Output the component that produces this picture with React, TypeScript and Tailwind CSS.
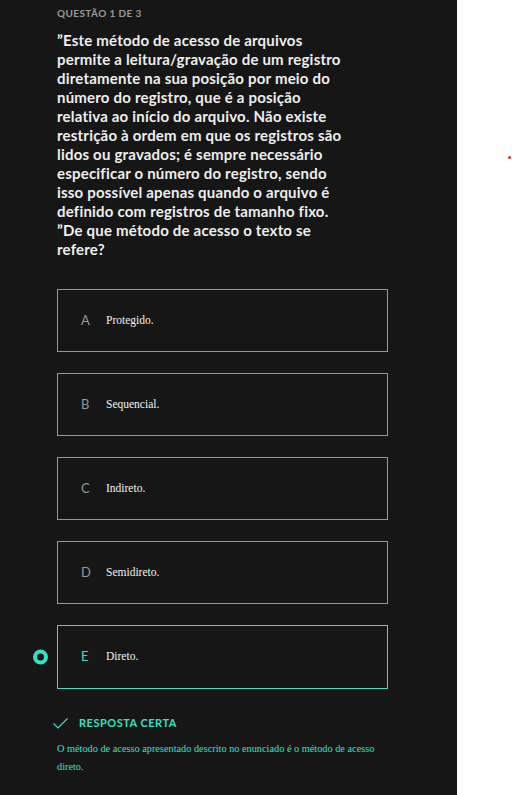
const options = [
  { letter: "A", text: "Protegido." },
  { letter: "B", text: "Sequencial." },
  { letter: "C", text: "Indireto." },
  { letter: "D", text: "Semidireto." },
  { letter: "E", text: "Direto.", selected: true },
];

const lines = [
  "”Este método de acesso de arquivos",
  "permite a leitura/gravação de um registro",
  "diretamente na sua posição por meio do",
  "número do registro, que é a posição",
  "relativa ao início do arquivo. Não existe",
  "restrição à ordem em que os registros são",
  "lidos ou gravados; é sempre necessário",
  "especificar o número do registro, sendo",
  "isso possível apenas quando o arquivo é",
  "definido com registros de tamanho fixo.",
  "”De que método de acesso o texto se",
  "refere?",
];

export default function App() {
  return (
    <div className="flex min-h-[795px] w-[512px] bg-white">
      <div className="w-[457px] shrink-0 bg-[#161616] pl-[57px] pr-[67px] pt-[6px]">
        <p className="text-[10px] font-bold leading-[14px] tracking-[0.4px] text-[#9a9a9a] [font-family:Lato,sans-serif]">
          QUESTÃO 1 DE 3
        </p>
        <p className="mt-[11px] whitespace-nowrap text-[15px] font-bold leading-[19px] tracking-[0.2px] text-[#eeeeee] [font-family:Lato,sans-serif]">
          {lines.map((l, i) => (
            <span key={i} className="block">
              {l}
            </span>
          ))}
        </p>

        <div className="mt-[30px] flex flex-col gap-[21px]">
          {options.map((o) => (
            <div key={o.letter} className="relative">
              {o.selected && (
                <span className="absolute left-[-24px] top-1/2 h-[15px] w-[15px] -translate-y-1/2 rounded-full border-[4px] border-[#35e0c4] bg-[#161616]" />
              )}
              <div
                className={
                  o.selected
                    ? "flex h-[64px] w-[331px] items-center border border-[#35e0c4] pl-[23px]"
                    : "flex h-[63px] w-[331px] items-center border border-[#8d9ba3] pl-[23px]"
                }
              >
                <span
                  className={
                    o.selected
                      ? "w-[25px] text-[13px] text-[#35e0c4] [font-family:Lato,sans-serif]"
                      : "w-[25px] text-[13px] text-[#8d9ba3] [font-family:Lato,sans-serif]"
                  }
                >
                  {o.letter}
                </span>
                <span className="text-[11.5px] text-[#f2f2f2] [font-family:'Liberation_Serif',serif]">
                  {o.text}
                </span>
              </div>
            </div>
          ))}
        </div>

        <div className="mt-[26px] flex items-center gap-[11px]">
          <svg width="15" height="11" viewBox="0 0 15 11" className="ml-[-4px]" fill="none">
            <path d="M0.5 5.5 L5 10 L14.5 0.5" stroke="#35e0c4" strokeWidth="1.2" />
          </svg>
          <span className="text-[11px] font-bold tracking-[0.5px] text-[#35e0c4] [font-family:Lato,sans-serif]">
            RESPOSTA CERTA
          </span>
        </div>
        <p className="mt-[8px] text-[10.3px] leading-[18px] text-[#35e0c4] [font-family:'Liberation_Serif',serif]">
          O método de acesso apresentado descrito no enunciado é o método de acesso direto.
        </p>
      </div>
      <div className="relative flex-1">
        <span className="absolute left-[51px] top-[156px] h-[3px] w-[3px] rounded-full bg-[#e02020]" />
      </div>
    </div>
  );
}
